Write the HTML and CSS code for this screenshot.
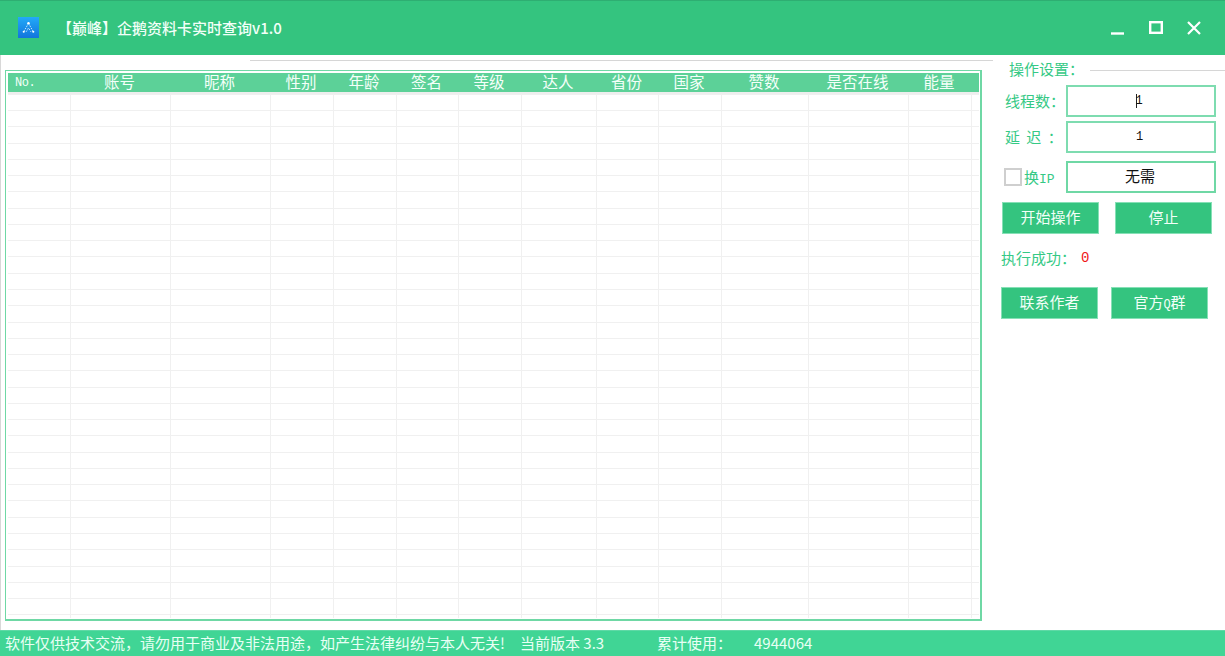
FILE: index.html
```html
<!DOCTYPE html>
<html lang="zh-CN">
<head>
<meta charset="utf-8">
<title>企鹅资料卡实时查询</title>
<link rel="stylesheet" href="styles.css">
</head>
<body>
<div class="app">
  <header class="titlebar">
    <svg class="logo" viewBox="0 0 22 22" aria-hidden="true">
      <defs><linearGradient id="lg" x1="0" y1="0" x2="0" y2="1"><stop offset="0" stop-color="#22aaf8"/><stop offset="1" stop-color="#1274dc"/></linearGradient></defs>
      <rect width="22" height="22" fill="url(#lg)"/>
      <path d="M11 6.5 6 15.5M11 6.5 16 15.5M8.5 15.5 11 11.5 13.5 15.5" fill="none" stroke="#cfeaff" stroke-width="1" stroke-dasharray="1.6 1.2"/>
      <circle cx="11" cy="6.5" r="1.3" fill="#fff"/><circle cx="6" cy="15.5" r="1.1" fill="#fff"/><circle cx="16" cy="15.5" r="1.1" fill="#fff"/>
    </svg>
    <h1 class="title">【巅峰】企鹅资料卡实时查询v1.0</h1>
    <div class="winctl">
      <svg class="ctl" viewBox="0 0 14 14" aria-hidden="true"><path d="M0 12.5H13" stroke="#fff" stroke-width="2.4"/></svg>
      <svg class="ctl" viewBox="0 0 14 14" aria-hidden="true"><rect x="1.2" y="1.2" width="11.6" height="10.6" fill="none" stroke="#fff" stroke-width="2.4"/></svg>
      <svg class="ctl" viewBox="0 0 14 14" aria-hidden="true"><path d="M1 1 13 13M13 1 1 13" stroke="#fff" stroke-width="2.2"/></svg>
    </div>
  </header>
  <main class="main">
    <section class="left">
      <div class="topline"></div>
      <div class="tablebox">
        <div class="cols thead">
          <span class="no">No.</span><span>账号</span><span>昵称</span><span>性别</span><span>年龄</span><span>签名</span><span>等级</span><span>达人</span><span>省份</span><span>国家</span><span>赞数</span><span>是否在线</span><span>能量</span>
        </div>
        <div class="cols tbody">
          <i></i><i></i><i></i><i></i><i></i><i></i><i></i><i></i><i></i><i></i><i></i><i></i><i></i>
        </div>
      </div>
    </section>
    <aside class="side">
      <div class="grouphead"><span class="grouplabel">操作设置：</span><span class="groupline"></span></div>
      <div class="row r1"><label class="lbl">线程数：</label><div class="field mono"><span class="caret"></span>1</div></div>
      <div class="row r2"><label class="lbl delay">延 迟 ：</label><div class="field mono">1</div></div>
      <div class="row r3">
        <span class="check"></span><label class="lbl ip">换<span class="monoip">IP</span></label>
        <div class="field plain">无需</div>
      </div>
      <div class="btnrow b1"><button class="btn">开始操作</button><button class="btn">停止</button></div>
      <div class="result"><span>执行成功：</span><span class="zero">0</span></div>
      <div class="btnrow b2"><button class="btn">联系作者</button><button class="btn">官方<span class="q">Q</span>群</button></div>
    </aside>
  </main>
  <footer class="status">
    <span class="s1">软件仅供技术交流，请勿用于商业及非法用途，如产生法律纠纷与本人无关!</span>
    <span class="s2">当前版本 3.3</span>
    <span class="s3">累计使用：</span>
    <span class="s4">4944064</span>
  </footer>
</div>
</body>
</html>
```
FILE: styles.css
```css
* { box-sizing: border-box; }
html, body { margin: 0; padding: 0; }
body {
  width: 1225px;
  height: 656px;
  overflow: hidden;
  background: #fff;
  font-family: "Noto Sans CJK SC", "Liberation Sans", sans-serif;
}
.app {
  display: flex;
  flex-direction: column;
  height: 656px;
  border-left: 1px solid #d8d8d8;
}
.titlebar {
  display: flex;
  align-items: center;
  flex: 0 0 55px;
  margin-left: -1px;
  padding-left: 18px;
  background: #34c47f;
  border-top: 1px solid #2eae72;
}
.logo { width: 21px; height: 21px; margin-top: -1px; flex: none; }
.title {
  margin: 0 0 0 18px;
  color: #f2fff8;
  font-size: 15px;
  font-weight: 500;
  line-height: 20px;
  white-space: nowrap;
}
.winctl {
  display: flex;
  gap: 24px;
  margin-left: auto;
  padding-right: 24px;
}
.ctl { width: 14px; height: 14px; display: block; }
.main { display: flex; flex: 0 0 575px; }
.left { width: 999px; padding: 5px 0 0 4px; flex: none; }
.topline {
  height: 1px;
  margin: 0 7px 0 245px;
  background: #d6d6d6;
}
.tablebox {
  width: 977px;
  height: 551px;
  margin-top: 9px;
  padding: 2px 1px 2px 2px;
  border: 1px solid #6fd8a5;
  border-width: 1px 2px 2px 1px;
  overflow: hidden;
  box-shadow: inset 0 0 0 1px #fff;
}
.cols {
  display: grid;
  grid-template-columns: 63px 100px 100px 63px 63px 62px 63px 75px 62px 63px 87px 100px 63px 9px;
}
.thead {
  height: 19px;
  background: #5cd198;
  color: #f4fff9;
  font-size: 15.5px;
  line-height: 15px;
  text-align: center;
  border-top: 1px solid #5cd198;
}
.thead span { white-space: nowrap; padding-right: 3px; }
.thead .no {
  text-align: left;
  padding-left: 7px;
  font: 12px/19px "Liberation Mono", monospace;
  letter-spacing: -0.4px;
}
.tbody {
  height: 526px;
  border-top: 2px solid #eeeeee;
  background: repeating-linear-gradient(to bottom, #f0f0f0 -0.27px, #f0f0f0 0.73px, #fff 0.73px, #fff 16px);
}
.tbody i { border-right: 1px solid #f0f0f0; }
.side { width: 225px; flex: none; }
.grouphead {
  display: flex;
  align-items: center;
  height: 30px;
  padding: 0 0 0 9px;
}
.grouplabel {
  color: #35c985;
  font-size: 15px;
  line-height: 26px;
  margin-bottom: 2px;
  width: 81px;
  white-space: nowrap;
}
.groupline { flex: 1; height: 1px; background: #d6d6d6; }
.row { display: flex; align-items: center; height: 32px; }
.lbl { color: #35c985; font-size: 15px; white-space: nowrap; line-height: 20px; }
.r1 { margin-bottom: 4px; padding-left: 5px; }
.r1 .lbl { width: 61px; }
.r2 { margin-bottom: 8px; padding-left: 5px; }
.r2 .lbl { width: 61px; letter-spacing: 1.5px; }
.r3 { padding-left: 4px; }
.check {
  width: 18px;
  height: 18px;
  border: 2px solid #cfcfcf;
  flex: none;
}
.ip { width: 44px; padding-left: 2px; font-size: 15px; }
.monoip { font: 13px "Liberation Mono", monospace; }
.field {
  display: flex;
  align-items: center;
  justify-content: center;
  width: 150px;
  height: 32px;
  border: 2px solid #7edcb0;
  color: #111;
  background: #fff;
}
.mono { font: 12px "Liberation Mono", monospace; padding-right: 3px; }
.plain { font-size: 15px; border-color: #6fd8a5; padding: 0 2px 3px 0; }
.caret { width: 1px; height: 14px; background: #222; margin-right: -2px; }
.btnrow { display: flex; }
.btn {
  height: 32px;
  width: 97px;
  padding: 0 0 4px;
  background: #34c47f;
  border: 1px solid #86e0b6;
  color: #f2fff8;
  font: 15px "Noto Sans CJK SC", sans-serif;
}
.q { font: 12px "Liberation Mono", monospace; }
.b1 { margin-top: 9px; padding-left: 2px; gap: 16px; }
.b2 { margin-top: 12px; padding-left: 1px; gap: 13px; }
.result {
  display: flex;
  align-items: center;
  height: 41px;
  padding: 6px 0 0 1px;
  color: #35c985;
  font-size: 15px;
}
.result span:first-child { width: 80px; white-space: nowrap; }
.zero { color: #f01818; font: 14px "Liberation Mono", monospace; }
.status {
  display: flex;
  align-items: center;
  flex: 0 0 26px;
  margin-left: -1px;
  padding: 0 0 2px 5px;
  background: #40d595;
  border-top: 1px solid #5fd9a6;
  color: #e8fff4;
  font-size: 15px;
  white-space: nowrap;
}
.s1 { width: 515px; }
.s2 { width: 137px; }
.s3 { width: 97px; }
```
